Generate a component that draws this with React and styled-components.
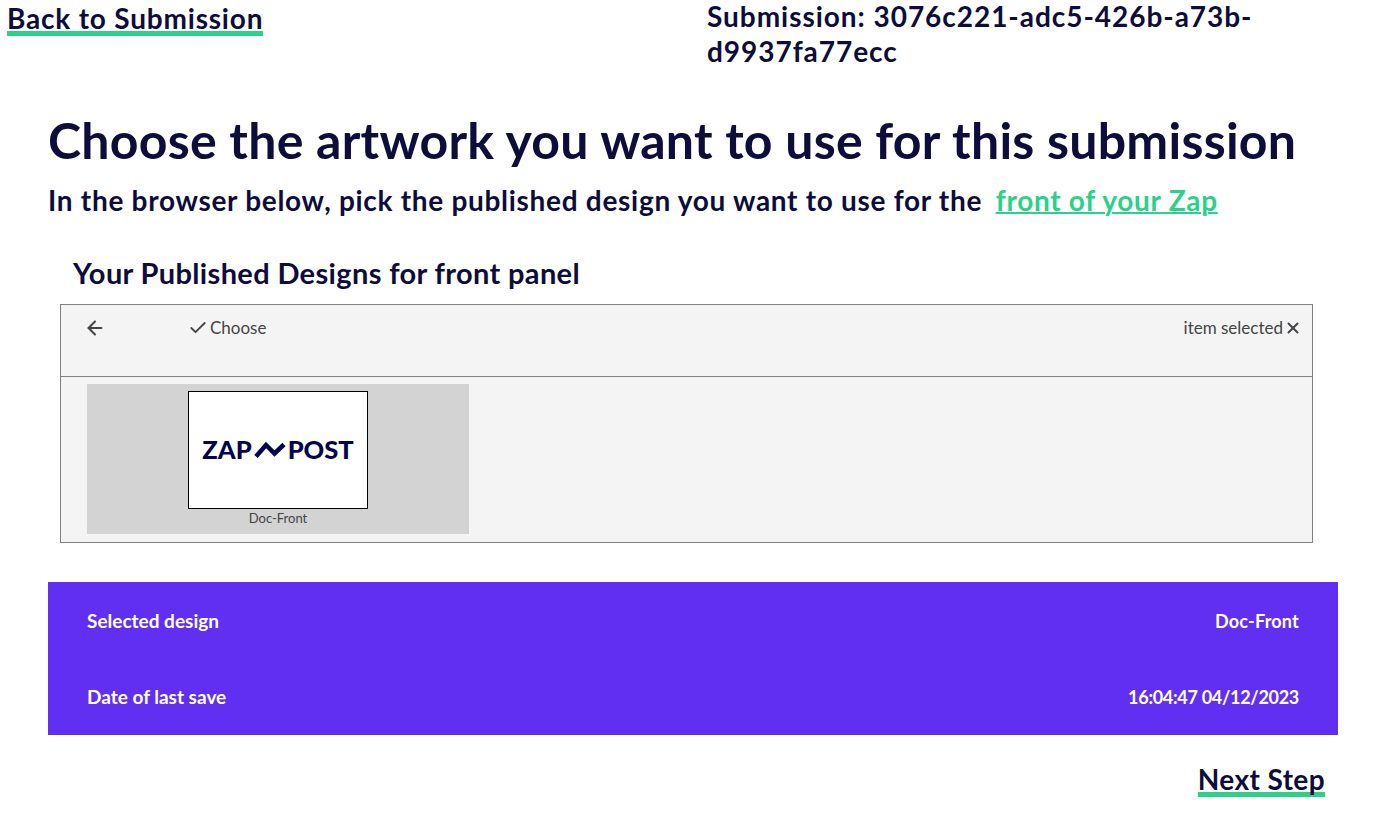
import React from 'react';
import styled, { createGlobalStyle } from 'styled-components';
import { ArrowLeft, Check, X } from 'lucide-react';

const GlobalStyle = createGlobalStyle`
    html, body {
        margin: 0;
        padding: 0;
        background: #fff;
    }
    body {
        font-family: 'Lato', 'Liberation Sans', sans-serif;
        color: #0d0c3a;
    }
`

const Page = styled.div`
    width: 1378px;
    height: 822px;
    overflow: hidden;
`

const TopBar = styled.div`
    display: grid;
    grid-template-columns: 707px 570px;
    height: 70px;
`

const BackCell = styled.div`
    padding: 6px 0 0 7px;
`

const HeavyLink = styled.a`
    display: inline-block;
    font-size: 28px;
    font-weight: 700;
    line-height: 25px;
    letter-spacing: ${props => props.spacing};
    color: #0d0c3a;
    border-bottom: 5px solid #2bd18a;
`

const SubmissionId = styled.div`
    display: flex;
    flex-direction: column;
    gap: 3px;
    font-size: 28px;
    font-weight: 700;
    line-height: 32px;
    letter-spacing: 0.96px;
`

const Intro = styled.div`
    padding: 0 48px;
    margin-top: 39px;
`

const Title = styled.h1`
    margin: 0;
    font-size: 50px;
    font-weight: 700;
    line-height: 62px;
    letter-spacing: 0.26px;
`

const Lead = styled.h2`
    margin: 11px 0 0;
    font-size: 28px;
    font-weight: 700;
    line-height: 36px;
    letter-spacing: 0.7px;
    white-space: nowrap;
`

const GreenLink = styled.a`
    margin-left: 6px;
    color: #2bd18a;
    text-decoration: underline;
    text-decoration-thickness: 2px;
`

const SectionTitle = styled.h3`
    margin: 37px 0 0 73px;
    font-size: 29px;
    font-weight: 700;
    line-height: 36px;
    letter-spacing: 0.35px;
`

const Browser = styled.div`
    box-sizing: border-box;
    width: 1253px;
    height: 239px;
    margin: 13px 0 0 60px;
    background: #f4f4f4;
    border: 1px solid #808080;
    color: #444;
`

const Toolbar = styled.div`
    box-sizing: border-box;
    display: flex;
    align-items: flex-start;
    height: 72px;
    padding: 11px 10px 0 23px;
    border-bottom: 1px solid #808080;
    font-size: 17px;
    line-height: 24px;
`

const ToolButton = styled.span`
    display: inline-flex;
    align-items: center;
    gap: 2px;
    width: ${props => props.width || 'auto'};
    padding-top: ${props => props.nudge || 0};
`

const SelectionNote = styled.span`
    display: inline-flex;
    align-items: center;
    gap: 1px;
    margin-left: auto;
`

const Files = styled.div`
    padding: 7px 26px;
`

const Tile = styled.div`
    display: flex;
    flex-direction: column;
    align-items: center;
    box-sizing: border-box;
    width: 382px;
    height: 150px;
    padding-top: 7px;
    background: #d3d3d3;
`

const Thumb = styled.div`
    display: flex;
    align-items: center;
    justify-content: center;
    gap: 2px;
    box-sizing: border-box;
    width: 180px;
    height: 118px;
    background: #fff;
    border: 1px solid #000;
    color: #04044d;
    font-size: 25.5px;
    font-weight: 900;
    line-height: 1;
`

const Caption = styled.div`
    font-size: 13px;
    line-height: 18px;
    color: #444;
`

const Summary = styled.div`
    box-sizing: border-box;
    display: grid;
    grid-auto-rows: 76px;
    width: 1290px;
    height: 153px;
    margin: 39px 0 0 48px;
    padding: 0 39px;
    background: #612ff1;
    color: #fff;
`

const SummaryRow = styled.div`
    display: flex;
    align-items: center;
    justify-content: space-between;
    font-size: 19px;
    font-weight: 700;
`

const SummaryValue = styled.span`
    padding-top: 2px;
    font-size: 18px;
    letter-spacing: ${props => props.spacing};
`

const Footer = styled.div`
    display: flex;
    justify-content: flex-end;
    padding: 32px 53px 0 0;
`

const Zig = () => (
    <svg width="32" height="18" viewBox="0 0 32 18" fill="none">
        <path d="M2 15.5 L12 4 L20.5 12.5 L30 3.5" stroke="#04044d" strokeWidth="4.5" />
    </svg>
)

const App = () => {
    return (
        <Page>
            <GlobalStyle />
            <TopBar>
                <BackCell>
                    <HeavyLink spacing="0.8px">Back to Submission</HeavyLink>
                </BackCell>
                <SubmissionId>
                    <span>Submission: 3076c221-adc5-426b-a73b-</span>
                    <span>d9937fa77ecc</span>
                </SubmissionId>
            </TopBar>
            <Intro>
                <Title>Choose the artwork you want to use for this submission</Title>
                <Lead>
                    In the browser below, pick the published design you want to use for the{' '}
                    <GreenLink>front of your Zap</GreenLink>
                </Lead>
            </Intro>
            <SectionTitle>Your Published Designs for front panel</SectionTitle>
            <Browser>
                <Toolbar>
                    <ToolButton width="104px" nudge="1px"><ArrowLeft size={22} strokeWidth={2.2} /></ToolButton>
                    <ToolButton><Check size={20} strokeWidth={2.2} />Choose</ToolButton>
                    <SelectionNote>item selected<X size={18} strokeWidth={2.6} /></SelectionNote>
                </Toolbar>
                <Files>
                    <Tile>
                        <Thumb>ZAP<Zig />POST</Thumb>
                        <Caption>Doc-Front</Caption>
                    </Tile>
                </Files>
            </Browser>
            <Summary>
                <SummaryRow><span>Selected design</span><SummaryValue spacing="0.2px">Doc-Front</SummaryValue></SummaryRow>
                <SummaryRow><span>Date of last save</span><SummaryValue spacing="-0.3px">16:04:47 04/12/2023</SummaryValue></SummaryRow>
            </Summary>
            <Footer>
                <HeavyLink spacing="0.4px">Next Step</HeavyLink>
            </Footer>
        </Page>
    );
};

export default App;
